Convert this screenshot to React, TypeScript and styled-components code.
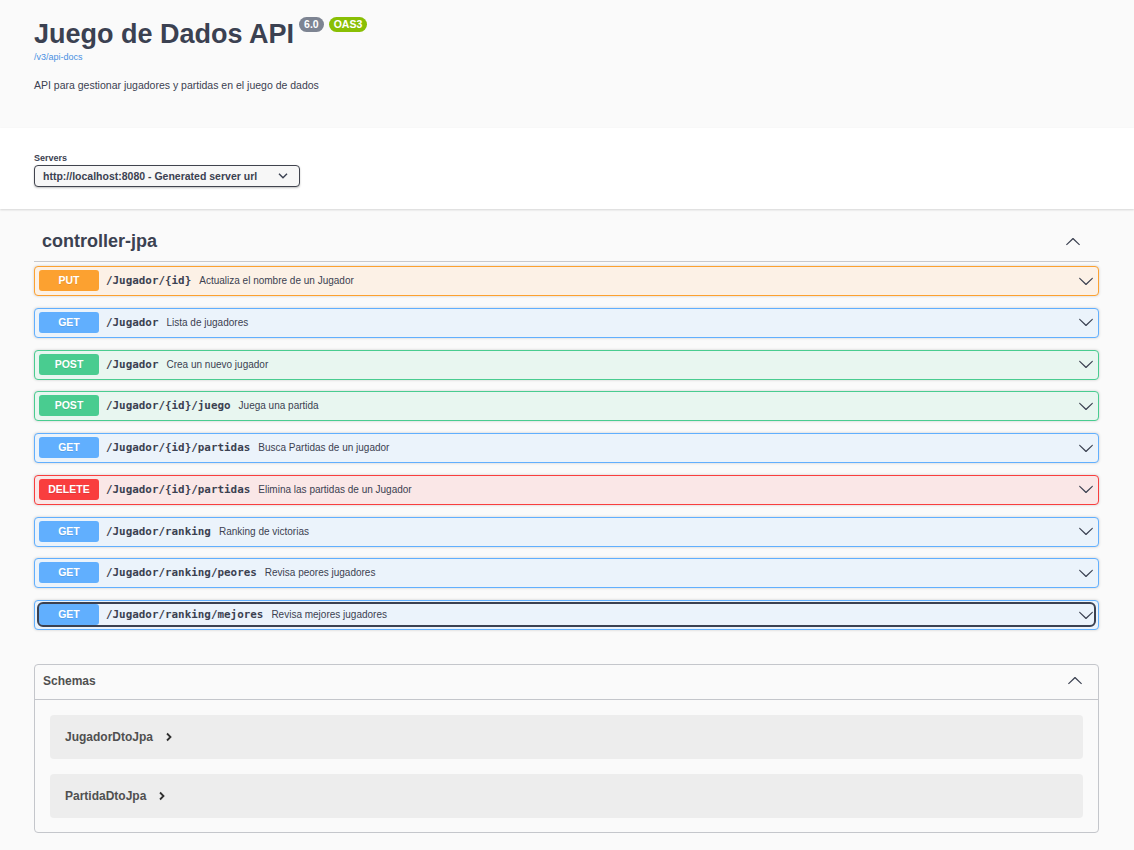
import React from "react";
import styled, { createGlobalStyle } from "styled-components";

const Global = createGlobalStyle`
  html, body { margin: 0; padding: 0; background: #fafafa; }
  body { font-family: "Liberation Sans", Arial, sans-serif; color: #3b4151; }
  * { box-sizing: border-box; }
`;

type Method = "PUT" | "GET" | "POST" | "DELETE";

const palette: Record<Method, { main: string; bg: string }> = {
  PUT: { main: "#fca130", bg: "#fcf1e6" },
  GET: { main: "#61affe", bg: "#ebf3fb" },
  POST: { main: "#49cc90", bg: "#e8f6f0" },
  DELETE: { main: "#f93e3e", bg: "#fae7e7" },
};

const Page = styled.div`
  width: 100%;
  min-height: 850px;
  background: #fafafa;
  padding-bottom: 16px;
`;

const InfoSection = styled.header`
  height: 128px;
  padding: 17px 34px 0;
`;

const TitleRow = styled.div`
  display: flex;
  align-items: flex-start;
`;

const Title = styled.h2`
  margin: 2px 0 0;
  font-size: 27px;
  line-height: 30px;
  font-weight: 700;
  color: #3b4151;
`;

const Badges = styled.div`
  display: flex;
  gap: 5px;
  margin-left: 5px;
`;

const Badge = styled.span<{ $color: string }>`
  display: inline-block;
  height: 15px;
  line-height: 15px;
  padding: 0 5px;
  border-radius: 57px;
  background: ${(p) => p.$color};
  color: #fff;
  font-size: 10.5px;
  font-weight: 700;
`;

const SpecLink = styled.a`
  display: block;
  margin-top: 2px;
  font-size: 9px;
  line-height: 12px;
  color: #4990e2;
  text-decoration: none;
`;

const Description = styled.p`
  margin: 15px 0 0;
  font-size: 10.5px;
  line-height: 14px;
  color: #3b4151;
`;

const SchemeContainer = styled.section`
  height: 81px;
  background: #fff;
  box-shadow: 0 1px 2px 0 rgba(0, 0, 0, 0.15);
  padding: 24px 34px 0;
`;

const ServersLabel = styled.div`
  font-size: 9px;
  line-height: 12px;
  font-weight: 700;
  color: #3b4151;
`;

const Select = styled.div`
  margin-top: 1px;
  width: 266px;
  height: 22px;
  display: flex;
  align-items: center;
  justify-content: space-between;
  padding: 0 11px 0 8px;
  border: 1px solid #41444e;
  border-radius: 4px;
  background: #f7f7f7;
  box-shadow: 0 1px 2px 0 rgba(0, 0, 0, 0.25);
  font-size: 10.5px;
  font-weight: 700;
  color: #3b4151;
`;

const Main = styled.main`
  padding: 0 35px 0 34px;
`;

const TagSection = styled.section`
  margin-top: 13px;
`;

const TagHeader = styled.div`
  height: 40px;
  display: flex;
  align-items: center;
  justify-content: space-between;
  padding: 0 18px 0 8px;
  border-bottom: 1px solid #c8c9cd;
`;

const TagTitle = styled.h3`
  margin: 0;
  font-size: 18px;
  font-weight: 700;
  color: #3b4151;
`;

const OpList = styled.div`
  margin-top: 4px;
  display: flex;
  flex-direction: column;
  gap: 11.75px;
`;

const OpBlock = styled.div<{ $method: Method }>`
  height: 30px;
  padding: 3px 4px;
  border: 1px solid ${(p) => palette[p.$method].main};
  background: ${(p) => palette[p.$method].bg};
  border-radius: 4px;
  box-shadow: 0 0 3px rgba(0, 0, 0, 0.19);
`;

const Summary = styled.div<{ $focused?: boolean }>`
  height: 21px;
  display: flex;
  align-items: center;
  border-radius: 4px;
  ${(p) => (p.$focused ? "outline: 2px solid #3b4151; outline-offset: 0px;" : "")}
`;

const MethodBadge = styled.span<{ $method: Method }>`
  flex: none;
  width: 60px;
  height: 21px;
  line-height: 21px;
  border-radius: 3px;
  background: ${(p) => palette[p.$method].main};
  color: #fff;
  text-align: center;
  font-size: 10.5px;
  font-weight: 700;
  text-shadow: 0 1px 0 rgba(0, 0, 0, 0.1);
`;

const Path = styled.span`
  margin-left: 7px;
  font-family: "DejaVu Sans Mono", "Liberation Mono", monospace;
  font-size: 10.9px;
  font-weight: 700;
  color: #3b4151;
`;

const OpDesc = styled.span`
  margin-left: 8px;
  font-size: 10px;
  color: #3b4151;
`;

const Arrow = styled.svg<{ $up?: boolean }>`
  flex: none;
  margin-left: auto;
  transform: ${(p) => (p.$up ? "rotate(180deg)" : "none")};
`;

const Models = styled.section`
  margin-top: 34px;
  border: 1px solid #c4c6cb;
  border-radius: 4px;
`;

const ModelsHeader = styled.div`
  height: 35px;
  display: flex;
  align-items: center;
  padding: 0 15px 3px 8px;
  border-bottom: 1px solid #c4c6cb;
`;

const ModelsTitle = styled.h4`
  margin: 0;
  font-size: 12px;
  font-weight: 700;
  color: #505050;
`;

const ModelList = styled.div`
  display: flex;
  flex-direction: column;
  gap: 15px;
  padding: 15px 15px 14px;
`;

const ModelItem = styled.div`
  height: 44px;
  display: flex;
  align-items: center;
  gap: 12px;
  padding: 0 15px;
  background: #ededed;
  border-radius: 4px;
`;

const ModelName = styled.span`
  font-size: 12px;
  font-weight: 700;
  color: #505050;
`;

const ARROW_D =
  "M17.418 6.109c.272-.268.709-.268.979 0s.271.701 0 .969l-7.908 7.83c-.27.268-.707.268-.979 0l-7.908-7.83c-.27-.268-.27-.701 0-.969.271-.268.709-.268.979 0L10 13.25l7.418-7.141z";

const Chevron = ({ up }: { up?: boolean }) => (
  <Arrow $up={up} width={16} height={16} viewBox="0 0 20 20" aria-hidden="true">
    <path fill="#3b4151" d={ARROW_D} />
  </Arrow>
);

const SmallRight = () => (
  <svg width="8" height="10" viewBox="0 0 8 10" aria-hidden="true">
    <polyline points="2,1.5 5.5,5 2,8.5" fill="none" stroke="#303030" strokeWidth="1.8" />
  </svg>
);

const SelectArrow = () => (
  <svg width="10" height="6" viewBox="0 0 10 6" aria-hidden="true">
    <polyline points="1,0.8 5,4.8 9,0.8" fill="none" stroke="#3b4151" strokeWidth="1.4" />
  </svg>
);

const ops: { method: Method; path: string; desc: string; focused?: boolean }[] = [
  { method: "PUT", path: "/Jugador/{id}", desc: "Actualiza el nombre de un Jugador" },
  { method: "GET", path: "/Jugador", desc: "Lista de jugadores" },
  { method: "POST", path: "/Jugador", desc: "Crea un nuevo jugador" },
  { method: "POST", path: "/Jugador/{id}/juego", desc: "Juega una partida" },
  { method: "GET", path: "/Jugador/{id}/partidas", desc: "Busca Partidas de un jugador" },
  { method: "DELETE", path: "/Jugador/{id}/partidas", desc: "Elimina las partidas de un Jugador" },
  { method: "GET", path: "/Jugador/ranking", desc: "Ranking de victorias" },
  { method: "GET", path: "/Jugador/ranking/peores", desc: "Revisa peores jugadores" },
  { method: "GET", path: "/Jugador/ranking/mejores", desc: "Revisa mejores jugadores", focused: true },
];

export default function App() {
  return (
    <Page>
      <Global />
      <InfoSection>
        <TitleRow>
          <Title>Juego de Dados API</Title>
          <Badges>
            <Badge $color="#7d8492">6.0</Badge>
            <Badge $color="#89bf04">OAS3</Badge>
          </Badges>
        </TitleRow>
        <SpecLink href="#">/v3/api-docs</SpecLink>
        <Description>API para gestionar jugadores y partidas en el juego de dados</Description>
      </InfoSection>
      <SchemeContainer>
        <ServersLabel>Servers</ServersLabel>
        <Select>
          <span>http://localhost:8080 - Generated server url</span>
          <SelectArrow />
        </Select>
      </SchemeContainer>
      <Main>
        <TagSection>
          <TagHeader>
            <TagTitle>controller-jpa</TagTitle>
            <Chevron up />
          </TagHeader>
          <OpList>
            {ops.map((op, i) => (
              <OpBlock key={i} $method={op.method}>
                <Summary $focused={op.focused}>
                  <MethodBadge $method={op.method}>{op.method}</MethodBadge>
                  <Path>{op.path}</Path>
                  <OpDesc>{op.desc}</OpDesc>
                  <Chevron />
                </Summary>
              </OpBlock>
            ))}
          </OpList>
        </TagSection>
        <Models>
          <ModelsHeader>
            <ModelsTitle>Schemas</ModelsTitle>
            <Chevron up />
          </ModelsHeader>
          <ModelList>
            <ModelItem>
              <ModelName>JugadorDtoJpa</ModelName>
              <SmallRight />
            </ModelItem>
            <ModelItem>
              <ModelName>PartidaDtoJpa</ModelName>
              <SmallRight />
            </ModelItem>
          </ModelList>
        </Models>
      </Main>
    </Page>
  );
}
